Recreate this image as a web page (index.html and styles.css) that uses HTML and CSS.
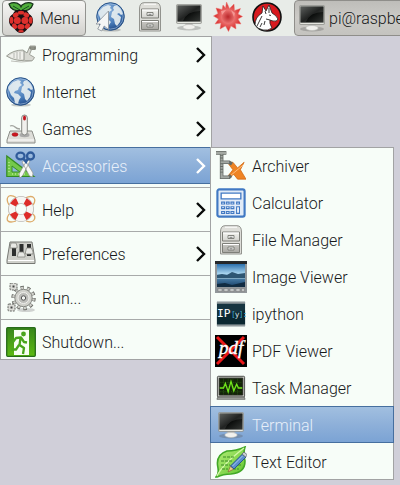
FILE: index.html
```
<!DOCTYPE html>
<html lang="en">
<head>
<meta charset="utf-8">
<title>Desktop menu</title>
<link rel="stylesheet" href="styles.css">
</head>
<body>
<svg class="defs" width="0" height="0" aria-hidden="true">
  <defs>
    <linearGradient id="metal" x2="0" y2="1"><stop stop-color="#f4f4f0"/><stop offset="1" stop-color="#aaa9a4"/></linearGradient>
    <linearGradient id="screen" x2="1" y2="1"><stop stop-color="#4a4d4b"/><stop offset=".5" stop-color="#090b0a"/><stop offset="1" stop-color="#343735"/></linearGradient>
    <radialGradient id="sea" cx=".4" cy=".3" r=".7"><stop stop-color="#8eb5df"/><stop offset=".65" stop-color="#477bb9"/><stop offset="1" stop-color="#244f8c"/></radialGradient>
    <radialGradient id="red" cx=".5" cy=".5"><stop stop-color="#b9272b"/><stop offset=".45" stop-color="#ea6f6d"/><stop offset="1" stop-color="#d5201f"/></radialGradient>
    <linearGradient id="green" x2="0" y2="1"><stop stop-color="#37851b"/><stop offset="1" stop-color="#5dba13"/></linearGradient>
    <linearGradient id="lake" x2="0" y2="1"><stop stop-color="#2c70ad"/><stop offset=".42" stop-color="#a9d5ef"/><stop offset=".55" stop-color="#5289b3"/><stop offset="1" stop-color="#173f66"/></linearGradient>
    <linearGradient id="leaf" x2="1" y2="1"><stop stop-color="#b6ee7a"/><stop offset="1" stop-color="#61c52f"/></linearGradient>
  </defs>
  <symbol id="i-globe" viewBox="0 0 30 30">
    <ellipse cx="15" cy="28" rx="10" ry="1.6" fill="#000" opacity=".2"/>
    <circle cx="14.5" cy="14.5" r="13.8" fill="url(#sea)" stroke="#285286"/>
    <path d="M3 9 7 5l5-2 3 1-1 2 2 2-3 2-1 3-3 1-1 2 4 1 3 3-2 3-1 4-3-1-1-5-3-3-2-5-1-2zM18 4l3-1 4 4 2 5-2 1-2-2-2 1 4 3-1 5-3 4-2-2-1-5-3-2 1-5 2-2-1-2z" fill="#e9eff1" opacity=".9"/>
    <circle cx="14.5" cy="14.5" r="12.6" fill="none" stroke="#b9d0eb" stroke-width=".8" opacity=".7"/>
  </symbol>
  <symbol id="i-cabinet" viewBox="0 0 30 30">
    <path d="M4.500 29v-22Q4.500 .7 9 .7h12q4.500 0 4.500 6.300v22z" fill="#deded9" stroke="#92938e"/>
    <path d="M6.500 7h17v9h-17zM6.500 18.500h17v9h-17z" fill="url(#metal)" stroke="#7e7f79"/>
    <path d="M7 8h16M7 19.500h16M9 2.200h12" stroke="#fff"/>
    <path d="M12 10.500h6v3h-6zM12 22h6v3h-6z" fill="#f4f4f2" stroke="#777872" stroke-width=".9"/>
    <path d="M13.500 12.300h3M13.500 23.800h3" stroke="#777"/>
  </symbol>
  <symbol id="i-monitor" viewBox="0 0 30 30">
    <ellipse cx="15" cy="26" rx="12" ry="2.500" fill="#555" opacity=".3"/>
    <path d="M12 20h6l1 4h-8z" fill="#bbb"/>
    <ellipse cx="15" cy="25" rx="6.200" ry="2.500" fill="#f1f1ee" stroke="#bcbdb8" stroke-width=".6"/>
    <rect x="2.500" y="2.500" width="25" height="19" rx="1" fill="#b8bab5" stroke="#868883" stroke-width=".6"/>
    <path d="M3.500 3.500h23v16h-23z" fill="url(#screen)"/>
    <path d="M4 4h22v5Q13 9 9 19H4z" fill="#fff" opacity=".1"/>
    <path d="M3.500 20.500h23" stroke="#e4e5df"/>
  </symbol>
</svg>

<header class="panel">
  <div class="menu-button">
    <svg class="berry" viewBox="0 0 26 32">
      <path d="M12.500 9Q3 9 1 2q6-3 11 1l1 2 1-2q6-4 11-1-2 7-11 7z" fill="#50ad3b" stroke="#16301a" stroke-width="1.200"/>
      <path d="m5 4 7 4m9-4-7 4" stroke="#184e20"/>
      <path d="M13 8q6-1 8 4 4 2 4 7t-5 7q-3 5-7 5t-7-5q-5-2-5-7t4-7q2-5 8-4z" fill="#181013"/>
      <g fill="#dc302c"><ellipse cx="13" cy="10.700" rx="3.200" ry="1.900"/><ellipse cx="7.700" cy="13" rx="3" ry="2.400" transform="rotate(-30 7.700 13)"/><ellipse cx="18.300" cy="13" rx="3" ry="2.400" transform="rotate(30 18.300 13)"/><circle cx="9.300" cy="18.600" r="3.500"/><circle cx="16.900" cy="18.600" r="3.500"/><ellipse cx="3.500" cy="18.300" rx="1.900" ry="3.500"/><ellipse cx="22.600" cy="18.300" rx="1.900" ry="3.500"/><ellipse cx="13" cy="24.700" rx="3.600" ry="2.800"/><ellipse cx="6.500" cy="24.200" rx="2.300" ry="3" transform="rotate(-30 6.500 24)"/><ellipse cx="19.500" cy="24.200" rx="2.300" ry="3" transform="rotate(30 19.500 24)"/><ellipse cx="13" cy="29.200" rx="2.800" ry="1.300"/></g>
    </svg>
    <span>Menu</span>
  </div>
  <div class="launchers">
    <svg class="icon" viewBox="0 0 30 30"><use href="#i-globe" width="30" height="30"/><path d="M12.500 9v18.500l-4.300-3.500-2.500 5-4-2 2.600-5H0z" fill="#f5f6f5" stroke="#858e97" stroke-width=".8"/></svg>
    <svg class="icon"><use href="#i-cabinet"/></svg>
    <svg class="icon"><use href="#i-monitor"/></svg>
    <svg class="icon" viewBox="0 0 30 30"><path d="m13.500 0 3 6.500L21 2l.5 6.500 6-2L25 12l4.500 2.500L25 17l3 5-5.500-.5.500 5.500-5-3-2.500 5.500-3-5.500L7 27l1-6-6 1 3.500-5L.5 14 5 11.500 3 6l6 1.500L10 3l2.500 3z" fill="url(#red)" stroke="#ed7a76" stroke-width=".5"/><path d="m8 9 5-1-4 5zM18 8l4 3-1 4z" fill="#f9aaa5" opacity=".7"/></svg>
    <svg class="icon" viewBox="0 0 30 30"><circle cx="15" cy="15" r="14" fill="#d7191f" stroke="#111" stroke-width="1.600"/><path d="M3 23Q3 15 10 11l1-7 3 5 3-6 3 8q4 2 6 6-1 3-5 2l-3-1q-1 3 2 8-4 3-9 2-5-1-8-5z" fill="#fff" stroke="#222" stroke-width=".8"/><path d="m13 9 1 3m3-6v5m-7 3-5 10m5-3-2 4m5-6-1 4M17 13l2 .5M18 18l-4-1" fill="none" stroke="#222" stroke-width=".9"/></svg>
  </div>
  <div class="task"><svg class="icon"><use href="#i-monitor"/></svg><span>pi@raspberrypi</span></div>
</header>

<nav class="menu main-menu">
  <div class="item">
    <svg class="icon" viewBox="0 0 30 30"><path d="M.5 16Q7 10 17 10l4 3 3-7h5.500v3.500h-4l-2 5 5 3-2 3Q9 22 .5 16z" fill="#d7d8d2" stroke="#9c9f96"/><path d="M3 16Q9 11 18 12v7Q9 20 3 16z" fill="#efefeb"/><path d="M8 13v5m3-6v7m3-7v7" stroke="#b5b7b1"/><path d="M18 11v9" stroke="#92948e"/><path d="M24 7h5v2h-5z" fill="#a6a99d" stroke="#777a70"/><path d="M5 21q10 2 21 0" stroke="#bdbfb9" fill="none"/></svg>
    <span>Programming</span><svg class="arrow" viewBox="0 0 12 18"><path d="m2 2 7 7-7 7"/></svg></div>
  <div class="item"><svg class="icon"><use href="#i-globe"/></svg><span>Internet</span><svg class="arrow" viewBox="0 0 12 18"><path d="m2 2 7 7-7 7"/></svg></div>
  <div class="item">
    <svg class="icon" viewBox="0 0 30 30"><path d="M4 12q3-1 5 1t5 2" fill="none" stroke="#a1a39e" stroke-width="1.300"/><path d="M4 17h22l3 9v3H1v-3z" fill="#deded9" stroke="#8c8e89"/><path d="M2 26h26" stroke="#fff"/><ellipse cx="18.500" cy="21" rx="5" ry="2.200" fill="#aaa"/><rect x="15.700" y="1" width="5.600" height="20" rx="2.800" fill="#f0f0ed" stroke="#858782"/><ellipse cx="18.500" cy="4" rx="1.500" ry="2.500" fill="#c21720"/><ellipse cx="9" cy="20.500" rx="3" ry="1.800" fill="#cf1720" stroke="#8c1118" stroke-width=".5"/></svg>
    <span>Games</span><svg class="arrow" viewBox="0 0 12 18"><path d="m2 2 7 7-7 7"/></svg></div>
  <div class="item selected">
    <svg class="icon" viewBox="0 0 30 30"><path d="M.8 5v20.500h27z" fill="#74c94a" stroke="#348b21" stroke-width="1.200"/><path d="M6 15v6h8z" fill="#8bb8d9" stroke="#398d25"/><path d="M3 11v1m0 2v1m0 2v1m0 2v1m3 2h1m2 0h1m2 0h1m2 0h1m2 0h1" stroke="#d7f5b9"/><path d="m16 11 3-2 8 13-.5 4-3-1zM21 9l3 1-7 14-3 3-1-4z" fill="#f8f8f6" stroke="#8f918d" stroke-width=".7"/><ellipse cx="14.500" cy="5" rx="4" ry="3.300" fill="none" stroke="#2f5b9a" stroke-width="2.300"/><ellipse cx="24.500" cy="5" rx="3.500" ry="3.500" fill="none" stroke="#2f5b9a" stroke-width="2.300"/><path d="m17 7 3 4 2-4" fill="none" stroke="#2f5b9a" stroke-width="2.500"/></svg>
    <span>Accessories</span><svg class="arrow" viewBox="0 0 12 18"><path d="m2 2 7 7-7 7"/></svg></div>
  <div class="rule"></div>
  <div class="item">
    <svg class="icon" viewBox="0 0 30 30"><g fill="none" stroke="#ddaa68" stroke-width="1.300"><path d="M3 10Q0 5 2 2t9 1M19 3q7-3 9 0t-1 7M3 19q-3 5-1 7t8 0M20 26q6 2 8-1t-1-6"/></g><circle cx="15" cy="14" r="9" fill="none" stroke="#aaa49f" stroke-width="7.600"/><circle cx="15" cy="14" r="9" fill="none" stroke="#f6f5f2" stroke-width="6.400"/><circle cx="15" cy="14" r="9" fill="none" stroke="#dd2b28" stroke-width="6.400" stroke-dasharray="6 8.137" stroke-dashoffset="-4"/></svg>
    <span>Help</span><svg class="arrow" viewBox="0 0 12 18"><path d="m2 2 7 7-7 7"/></svg></div>
  <div class="rule"></div>
  <div class="item">
    <svg class="icon" viewBox="0 0 30 30"><path d="M4 3h22l3 18v3.500H1V21z" fill="#cfd0ca" stroke="#777974"/><path d="M2 21.500h26" stroke="#fff"/><path d="M6 5h4v12H6zM13.500 5h4v12h-4zM21 5h4v12h-4z" fill="#2d2f2e"/><path d="m4 9 1-5h5l1 3v2H4zM11.500 17l1-4h5l1.500 3v2h-7.500zM19.500 13l1-4h5l1.500 4v2h-7.500z" fill="#e8e9e5" stroke="#858780" stroke-width=".8"/></svg>
    <span>Preferences</span><svg class="arrow" viewBox="0 0 12 18"><path d="m2 2 7 7-7 7"/></svg></div>
  <div class="rule"></div>
  <div class="item">
    <svg class="icon" viewBox="0 0 30 30"><ellipse cx="20" cy="27" rx="9" ry="2" fill="#aaa" opacity=".5"/><circle cx="17.500" cy="15" r="10.400" fill="none" stroke="#686a65" stroke-width="3.600" stroke-dasharray="3.300 3.235"/><circle cx="17.500" cy="15" r="10" fill="none" stroke="#d0d1cb" stroke-width="2.500" stroke-dasharray="2.200 4.083" stroke-dashoffset="-.5"/><circle cx="17.500" cy="15" r="8.700" fill="#d0d1cb" stroke="#868883"/><circle cx="17.500" cy="15" r="5.500" fill="#bbbcb8" stroke="#efefec"/><circle cx="17.500" cy="15" r="2.200" fill="#f4f7f3" stroke="#555"/><g fill="#dbdcd7" stroke="#61635f" stroke-dasharray="2 1"><rect x="4" y="0" width="7" height="7" rx="1"/><rect x="2" y="21" width="7" height="7" rx="1"/></g><path d="M6.500 2.500h2v2h-2zM4.500 23.500h2v2h-2z" fill="#444"/></svg>
    <span>Run...</span></div>
  <div class="rule"></div>
  <div class="item">
    <svg class="icon" viewBox="0 0 30 30"><rect x=".7" y=".7" width="28.600" height="28.600" rx="1" fill="url(#green)" stroke="#276c19" stroke-width="1.300"/><path d="M8 3h15v25H8z" fill="#f8fff3"/><circle cx="17.500" cy="7" r="2.400" fill="#49a51c"/><path d="m7 15 3-4 5-.5 3 4.500 3 .5M14.500 11l-1 7 4.500 3-1 6M13 18l-3 4.500H5.500" fill="none" stroke="#49a51c" stroke-width="2.300" stroke-linejoin="round"/></svg>
    <span>Shutdown...</span></div>
</nav>

<nav class="menu sub-menu">
  <div class="item"><svg class="icon" viewBox="0 0 32 32"><path d="M12 12h6l5 6 7-6-4 8 6 10H23l-4-5-8 4 7-9z" fill="#ef8424" stroke="#d0660f" stroke-width=".8"/><path d="m12 29 17-14" stroke="#ffc184"/><g fill="none"><path d="M6 2v26h8l2-2M6 12h8l3 2M0 2h11" stroke="#666b66" stroke-width="3.800"/><path d="M6 3v25h8M6 12h8M0 2h11" stroke="#a3a8a2" stroke-width="2.200"/><path d="M6 4v20" stroke="#626862" stroke-width="3" stroke-dasharray="1 2"/></g></svg><span>Archiver</span></div>
  <div class="item"><svg class="icon" viewBox="0 0 32 32"><rect x="1.500" y="1.500" width="29" height="29" rx="2" fill="#e1ebf7" stroke="#4179c3" stroke-width="2.300"/><path d="M5.500 5.500h21v6h-21z" fill="#fff" stroke="#4179c3" stroke-width="1.400"/><g fill="#fff" stroke="#4179c3" stroke-width="1.200"><path d="M6 15h3v2H6zM11 15h3v2h-3zM16 15h3v2h-3zM22 15h3v2h-3zM6 20h3v2H6zM11 20h3v2h-3zM16 20h3v2h-3zM6 25h3v2H6zM11 25h3v2h-3zM16 25h3v2h-3zM22 20h3v7h-3z"/></g></svg><span>Calculator</span></div>
  <div class="item"><svg class="icon"><use href="#i-cabinet"/></svg><span>File Manager</span></div>
  <div class="item"><svg class="icon large" viewBox="0 0 32 32"><path d="M0 0h32v32H0z" fill="#92979a"/><path d="M0 0h32v3H0z" fill="#25282b"/><path d="M2 3h28v23H2z" fill="url(#lake)"/><path d="m2 14 5-1 5 1 5-3 6 2 7-1v5H2z" fill="#2e5673"/><path d="M2 17h28v1H2z" fill="#7ea8c2"/><path d="m2 23 8-1 7 2 13-3v5H2z" fill="#112c42"/><path d="M3 27.500h4v3H3zm6 0h4v3H9zm6 0h4v3h-4zm6 0h4v3h-4zm5.500 0h3v3h-3z" fill="#c2c5c5" stroke="#777" stroke-width=".5"/></svg><span>Image Viewer</span></div>
  <div class="item"><svg class="icon" viewBox="0 0 32 32"><path d="M1 3h30v26H1z" fill="#163540"/><path d="M1 3h30v2H1zM1 27h30v2H1z" fill="#8f989a"/><path d="m1 19 30-7v15H1z" fill="#0b2831"/><text class="ip" x="1" y="19.500">IP</text><text class="py" x="16" y="19"><tspan class="bracket">[</tspan>y<tspan class="bracket">]:</tspan></text></svg><span>ipython</span></div>
  <div class="item"><svg class="icon large" viewBox="0 0 32 32"><path d="M0 0h32v32H0z"/><path d="m2 2 27 27M29 2 2 29" stroke="#eb1718" stroke-width="3"/><text class="pdf" x="4" y="19">pdf</text></svg><span>PDF Viewer</span></div>
  <div class="item"><svg class="icon" viewBox="0 0 32 32"><path d="M3 23h26l2 5H1z" fill="#a7aaa5" stroke="#6d706c"/><rect x="1.500" y="3.500" width="29" height="22" rx="1" fill="#c2c4bd" stroke="#454844"/><path d="M3.500 5.500h25v18h-25z" fill="#122408" stroke="#22251f"/><path d="M4 10h24M4 15h24M4 20h24M8 6v17m5-17v17m5-17v17m5-17v17" stroke="#2d6314" stroke-width=".8" stroke-dasharray="1 1"/><path d="M4 16h4l2-5 3 9 3-11 3 10 3-7 2 4h4" fill="none" stroke="#70e51b" stroke-width="1.400"/></svg><span>Task Manager</span></div>
  <div class="item selected"><svg class="icon"><use href="#i-monitor"/></svg><span>Terminal</span></div>
  <div class="item"><svg class="icon large" viewBox="0 0 32 32"><path d="M1 31Q4 28 3 22 0 9 12 5q9 0 18-4-2 6 0 14 0 12-14 13-8 0-14 3z" fill="url(#leaf)" stroke="#42a827" stroke-width="1.600"/><path d="M2 30Q7 19 29 2" fill="none" stroke="#d4f8a8" stroke-width="1.300"/><path d="M8 11h11M6 15h12M6 19h9M7 23h6m6-4h8m-9 4h6" stroke="#3c8b27" stroke-dasharray="3 1"/><path d="m13 26 2.500-6 3.500 3z" fill="#efca8a" stroke="#8b6438" stroke-width=".7"/><path d="m15.500 20 12-12 3.500 3-12 12z" fill="#5b8fcd" stroke="#27558e"/><path d="m27 8 2-2 3.500 3-2 2z" fill="#c9d0d5" stroke="#61676d" stroke-width=".8"/><path d="m17.500 20 10-10" stroke="#a7c9ed"/></svg><span>Text Editor</span></div>
</nav>
</body>
</html>
```

FILE: styles.css
```
* { box-sizing: border-box; }

body {
  margin: 0;
  width: 400px;
  height: 485px;
  overflow: hidden;
  position: relative;
  background: #d0cfd9;
  color: #17191b;
  font: 300 16px/20px Roboto, sans-serif;
}

.defs { position: absolute; }
.icon { flex: none; width: 30px; height: 30px; }
.large { width: 32px; height: 32px; margin: 0 -1px; }

.panel {
  display: flex;
  align-items: flex-start;
  width: 400px;
  height: 36px;
  padding-left: 2px;
  background: #e8ece8;
  overflow: hidden;
}

.menu-button {
  display: flex;
  flex: none;
  align-items: center;
  gap: 6px;
  width: 84px;
  height: 36px;
  padding-left: 5px;
  border: 1px solid #92938f;
  border-radius: 4px;
  background: linear-gradient(#f6f6f4, #e4e3e0 55%, #d1d0cc);
}
.menu-button span, .task span { padding-top: 2px; }
.berry { flex: none; width: 26px; height: 32px; }

.launchers { display: flex; flex: none; gap: 9px; margin: 2px 0 0 10px; }

.task {
  display: flex;
  flex: none;
  align-items: center;
  width: 130px;
  height: 36px;
  margin-left: 12px;
  padding-left: 2px;
  border: 1px solid #8f8e8a;
  border-radius: 4px;
  background: linear-gradient(#bebdb9, #cccbc7 50%, #c4c3bf);
}
.task span { margin-left: 2px; white-space: nowrap; }

.menu {
  position: absolute;
  border: 1px solid #a2a3a4;
  background: #f7fdf8;
}
.main-menu { left: 0; top: 36px; width: 212px; height: 324px; }
.sub-menu { left: 210px; top: 147px; width: 184px; height: 333px; }

.item {
  display: flex;
  align-items: center;
  gap: 6px;
  height: 37px;
  margin: 0 -1px;
  padding: 0 5px 0 6px;
  white-space: nowrap;
}
.item:first-child { margin-top: -1px; }
.item span { padding-top: 2px; }

.selected {
  border: 1px solid #466f9f;
  border-width: 1px 1px 1px 0;
  color: #e7eff9;
  background: linear-gradient(#a1bfe0, #8eb0d9 50%, #7ba3d4);
}
.sub-menu .selected { border-left-width: 1px; padding-left: 5px; padding-right: 4px; }

.arrow {
  width: 12px;
  height: 18px;
  margin-left: auto;
  fill: none;
  stroke: #080a09;
  stroke-width: 2.4;
}
.selected .arrow { stroke: #fff; margin-right: -1px; }

.rule { height: 7px; padding-top: 3px; }
.rule::before { content: ""; display: block; height: 1px; background: #a8aaaa; }

.ip { font: 12px "DejaVu Sans Mono", monospace; fill: #fff; }
.py { font: 8.5px "DejaVu Sans Mono", monospace; fill: #d5e1e4; letter-spacing: -1px; }
.bracket { fill: #40a4cf; }
.pdf { font: italic 400 19px "Liberation Serif", serif; fill: #fff; stroke: #fff; stroke-width: .4px; }
```
